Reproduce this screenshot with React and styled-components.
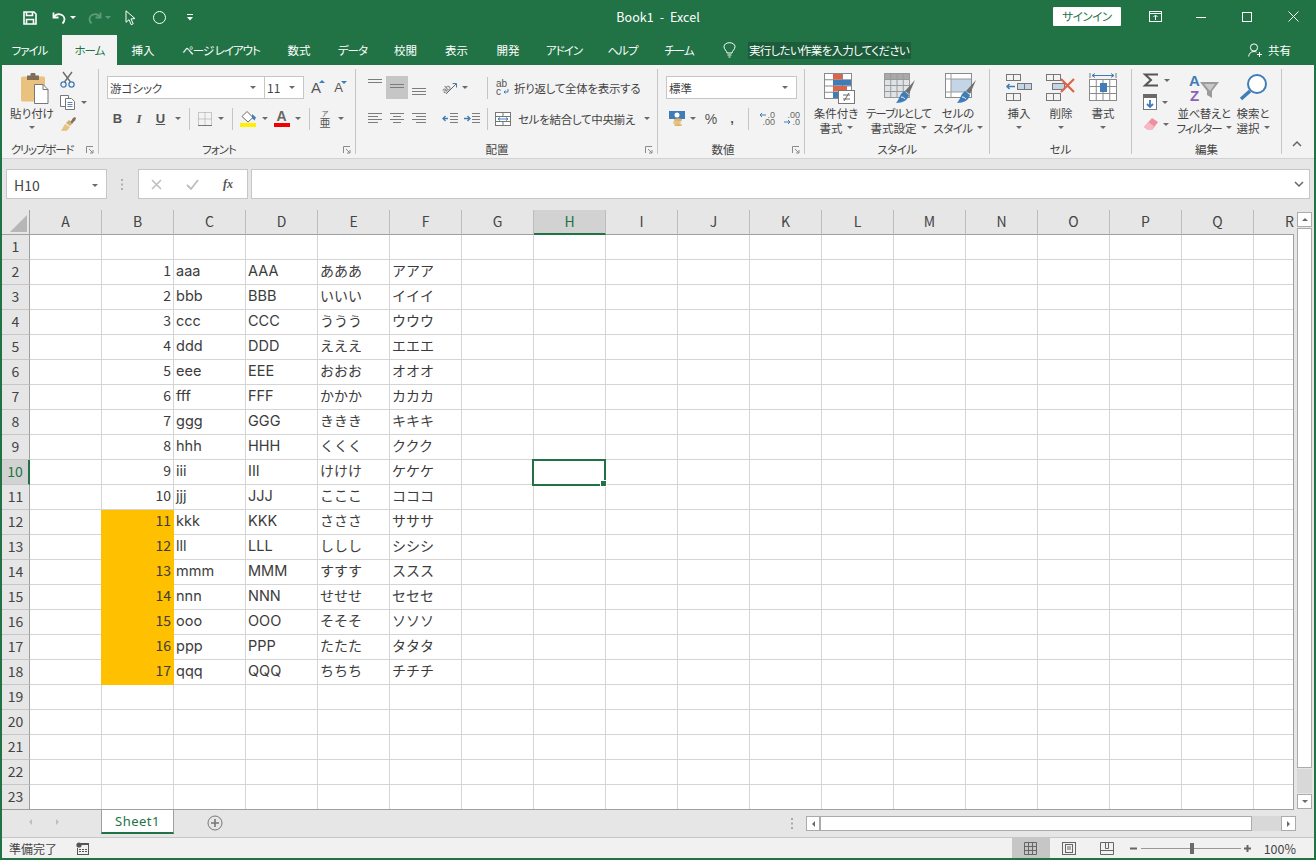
import React from "react";
import styled, { createGlobalStyle } from "styled-components";

const JP = `"Noto Sans CJK JP", "Noto Sans", sans-serif`;
const GREEN = "#217346";
const BLUE = "#3f7cb8";
const RED = "#d9664a";

const Global = createGlobalStyle`
  html, body { margin: 0; padding: 0; background: #fff; }
  * { box-sizing: border-box; }
  body { font-family: ${JP}; font-feature-settings: "palt"; color: #444; }
`;

const Window = styled.div`
  width: 1316px;
  height: 860px;
  display: flex;
  flex-direction: column;
  border: 2px solid ${GREEN};
  border-top: 0;
  overflow: hidden;
  background: #e6e6e6;
`;

/* title bar */
const TitleBar = styled.div`
  height: 35px;
  flex: none;
  margin: 0 -2px;
  background: ${GREEN};
  display: grid;
  grid-template-columns: 1fr auto 1fr;
  align-items: center;
  color: #fff;
`;
const Qat = styled.div`
  display: flex;
  align-items: center;
  padding-left: 23px;
`;
const QatItem = styled.span`
  display: flex;
  margin-left: ${(p) => p.$ml || 0}px;
`;
const Title = styled.div`
  font-size: 12.5px;
  white-space: pre;
  letter-spacing: 0.1px;
  margin-bottom: 2px;
`;
const WinControls = styled.div`
  display: flex;
  align-items: center;
  justify-content: flex-end;
  margin-bottom: 2px;
`;
const SignIn = styled.div`
  width: 68px;
  height: 19px;
  background: #fff;
  color: ${GREEN};
  font-size: 11.5px;
  line-height: 19px;
  text-align: center;
  letter-spacing: -0.4px;
  border-radius: 1px;
  margin-right: 11px;
`;
const WinBtn = styled.div`
  width: 46px;
  height: 20px;
  display: flex;
  align-items: center;
  justify-content: center;
`;
const Caret = styled.span`
  display: block;
  flex: none;
  width: 0;
  height: 0;
  border-left: 3px solid transparent;
  border-right: 3px solid transparent;
  border-top: 3px solid ${(p) => p.$c || "#6a6a6a"};
`;

/* tabs */
const TabRow = styled.div`
  height: 30px;
  flex: none;
  margin: 0 -2px;
  padding-left: 2px;
  background: ${GREEN};
  display: flex;
  align-items: stretch;
  color: #fff;
  font-size: 11.5px;
`;
const Tab = styled.div`
  width: ${(p) => p.$w}px;
  display: flex;
  align-items: center;
  justify-content: center;
  background: ${(p) => (p.$active ? "#f3f3f3" : "transparent")};
  color: ${(p) => (p.$active ? GREEN : "#fff")};
  margin-right: ${(p) => p.$mr || 0}px;
  letter-spacing: ${(p) => p.$ls}px;
  white-space: pre;
`;
const TellMe = styled.div`
  display: flex;
  align-items: center;
  margin-left: 16px;
  gap: 12px;
`;
const TellText = styled.span`
  background: #1b5c3a;
  padding: 0 1px;
  height: 17px;
  line-height: 17px;
  width: 163px;
  white-space: nowrap;
  letter-spacing: -0.7px;
`;
const Share = styled.div`
  margin-left: auto;
  margin-right: 25px;
  display: flex;
  align-items: center;
  gap: 6px;
`;

/* ribbon */
const Ribbon = styled.div`
  height: 94px;
  padding-top: 4px;
  background: #f3f3f3;
  border-bottom: 1px solid #d2d2d2;
  display: flex;
  flex: none;
`;
const Group = styled.div`
  width: ${(p) => p.$w}px;
  height: 85px;
  border-right: 1px solid #c6c6c6;
  display: flex;
  flex-direction: column;
  flex: none;
  position: relative;
`;
const GroupBody = styled.div`
  height: 75px;
  display: flex;
  padding-left: ${(p) => p.$pl || 0}px;
`;
const GroupLabel = styled.div`
  height: 10px;
  line-height: 10px;
  text-align: center;
  font-size: 11.5px;
  color: #444;
  padding-right: ${(p) => p.$pr || 0}px;
  letter-spacing: ${(p) => p.$ls || 0}px;
`;
const Launcher = styled.svg`
  position: absolute;
  right: 4px;
  bottom: 0;
  width: 8px;
  height: 8px;
`;
const Stack = styled.div`
  display: flex;
  flex-direction: column;
  padding-top: 7px;
  gap: 8px;
`;
const Row = styled.div`
  height: 23px;
  display: flex;
  align-items: center;
`;
const Tool = styled.div`
  width: ${(p) => p.$w}px;
  height: 23px;
  flex: none;
  display: flex;
  align-items: center;
  justify-content: center;
  margin-left: ${(p) => p.$ml || 0}px;
  background: ${(p) => (p.$on ? "#c6c6c6" : "transparent")};
  color: #555;
`;
const Letter = styled.span`
  font-family: "Liberation Serif", serif;
  font-weight: 700;
  font-size: 13px;
  color: #555;
  font-style: ${(p) => (p.$i ? "italic" : "normal")};
  text-decoration: ${(p) => (p.$u ? "underline" : "none")};
`;
const SansLetter = styled(Letter)`
  font-family: "Liberation Sans", sans-serif;
`;
const Percent = styled.span`
  font-family: "Liberation Sans", sans-serif;
  font-size: 14px;
  color: #555;
`;
const Comma = styled(Percent)`
  font-weight: 700;
  font-size: 13px;
  line-height: 8px;
`;
const GrowA = styled.span`
  position: relative;
  font-family: "Liberation Sans", sans-serif;
  font-size: ${(p) => p.$fs}px;
  color: #555;
`;
const Nub = styled.i`
  position: absolute;
  right: -4px;
  top: 1px;
  width: 0;
  height: 0;
  border-left: 3px solid transparent;
  border-right: 3px solid transparent;
  border-bottom: ${(p) => (p.$up ? `3px solid ${BLUE}` : "0")};
  border-top: ${(p) => (p.$up ? "0" : `3px solid ${BLUE}`)};
`;
const FontColor = styled.span`
  width: 16px;
  height: 17px;
  display: block;
  text-align: center;
  font-family: "Liberation Sans", sans-serif;
  font-weight: 700;
  font-size: 14px;
  line-height: 13px;
  color: #666;
  border-bottom: 4px solid #f00000;
`;
const Ruby = styled.span`
  display: flex;
  flex-direction: column;
  align-items: center;
  color: #555;
`;
const RubyKana = styled.span`
  font-size: 7px;
  line-height: 7px;
`;
const RubyBase = styled.span`
  font-size: 11px;
  line-height: 11px;
`;
const Decimal = styled.span`
  display: flex;
  flex-direction: column;
  align-items: flex-end;
  width: 20px;
  font-family: "Liberation Sans", sans-serif;
  font-size: 9px;
  line-height: 7px;
  color: #666;
`;
const DecimalLine = styled.span`
  display: flex;
  align-items: center;
  gap: 1px;
`;
const VSep = styled.div`
  width: 1px;
  height: 22px;
  flex: none;
  background: #c6c6c6;
  margin: 0 ${(p) => p.$r ?? 4}px 0 ${(p) => p.$l ?? 4}px;
`;
const Combo = styled.div`
  width: ${(p) => p.$w}px;
  height: 23px;
  flex: none;
  background: #fff;
  border: 1px solid #c6c6c6;
  margin-left: ${(p) => p.$ml || 0}px;
  display: flex;
  align-items: center;
  justify-content: space-between;
  padding: 0 8px 0 2px;
  font-size: ${(p) => p.$fs || 11.5}px;
`;
const RowText = styled.span`
  font-size: 11.5px;
  white-space: nowrap;
  letter-spacing: -0.3px;
  margin-left: ${(p) => p.$ml || 0}px;
`;
const Big = styled.div`
  width: ${(p) => p.$w}px;
  flex: none;
  display: flex;
  flex-direction: column;
  align-items: center;
`;
const BigIcon = styled.div`
  height: 37px;
  display: flex;
  align-items: flex-start;
  justify-content: center;
  flex: none;
  padding-top: ${(p) => p.$top ?? 4}px;
  padding-left: ${(p) => (p.$dx || 0) * 2}px;
`;
const BigText = styled.div`
  height: 14.5px;
  line-height: 14.5px;
  font-size: 11.5px;
  white-space: nowrap;
  display: flex;
  align-items: center;
  gap: 4px;
  letter-spacing: ${(p) => p.$ls || 0}px;
`;
const SmallCol = styled.div`
  width: ${(p) => p.$w}px;
  flex: none;
  display: flex;
  flex-direction: column;
  margin-left: ${(p) => p.$ml || 0}px;
`;
const SmallItem = styled.div`
  height: 22px;
  padding-left: ${(p) => p.$pl || 0}px;
  display: flex;
  align-items: center;
  gap: 5px;
`;
const Collapse = styled.div`
  flex: 1;
  display: flex;
  align-items: flex-end;
  justify-content: center;
  padding: 0 3px 7px 0;
  height: 85px;
`;

/* formula bar */
const FormulaBar = styled.div`
  height: 51px;
  padding: 10px 4px 11px 4px;
  display: flex;
  align-items: stretch;
  flex: none;
`;
const NameBox = styled.div`
  width: 101px;
  background: #fff;
  border: 1px solid #c6c6c6;
  display: flex;
  align-items: center;
  justify-content: space-between;
  padding: 2px 8px 0 7px;
  font-size: 14px;
  color: #444;
`;
const Grip = styled.div`
  width: 31px;
  display: flex;
  align-items: center;
  justify-content: center;
`;
const FxBox = styled.div`
  width: 110px;
  background: #fff;
  border: 1px solid #c6c6c6;
  display: flex;
  align-items: center;
  padding-left: 12px;
  gap: 24px;
`;
const FxText = styled.span`
  font-family: "Liberation Serif", serif;
  font-style: italic;
  font-weight: 700;
  font-size: 12px;
  color: #555;
`;
const FormulaInput = styled.div`
  width: 1059px;
  margin-left: 3px;
  background: #fff;
  border: 1px solid #c6c6c6;
  display: flex;
  align-items: center;
  justify-content: flex-end;
  padding-right: 5px;
`;

/* sheet */
const SheetArea = styled.div`
  height: 600px;
  display: flex;
  flex: none;
`;
const SheetGrid = styled.div`
  width: 1292px;
  height: 600px;
  overflow: hidden;
`;
const HeaderRow = styled.div`
  display: grid;
  grid-template-columns: 28px repeat(18, 72px);
  height: 25px;
`;
const Corner = styled.div`
  border-right: 1px solid #9f9f9f;
  border-bottom: 1px solid #9f9f9f;
  display: flex;
  align-items: flex-end;
  justify-content: flex-end;
  padding: 0 2px 2px 0;
`;
const Triangle = styled.div`
  width: 17px;
  height: 17px;
  background: #b6b6b6;
  clip-path: polygon(100% 0, 100% 100%, 0 100%);
`;
const ColHead = styled.div`
  background: ${(p) => (p.$sel ? "#d2d2d2" : "#e6e6e6")};
  border-right: 1px solid #bcbcbc;
  border-bottom: ${(p) => (p.$sel ? `2px solid ${GREEN}` : "1px solid #9f9f9f")};
  color: ${(p) => (p.$sel ? GREEN : "#444")};
  text-align: center;
  line-height: 23px;
  font-size: 14px;
`;
const Body = styled.div`
  display: grid;
  grid-template-columns: 28px repeat(18, 72px);
  grid-auto-rows: 25px;
  height: 575px;
  width: 1292px;
  overflow: hidden;
  border-right: 1px solid #9f9f9f;
  border-bottom: 1px solid #9f9f9f;
`;
const RowHead = styled.div`
  background: ${(p) => (p.$sel ? "#d2d2d2" : "#e6e6e6")};
  border-right: ${(p) => (p.$sel ? `2px solid ${GREEN}` : "1px solid #9f9f9f")};
  border-bottom: 1px solid #c6c6c6;
  color: ${(p) => (p.$sel ? GREEN : "#444")};
  text-align: center;
  line-height: 23px;
  font-size: 14px;
`;
const Cell = styled.div`
  background: ${(p) => p.$fill || "#fff"};
  border-right: 1px solid ${(p) => p.$fill || "#d4d4d4"};
  border-bottom: 1px solid ${(p) => p.$fill || "#d4d4d4"};
  box-shadow: ${(p) => (p.$fill ? `-1px 0 0 ${p.$fill}` : "none")};
  padding: 0 2px;
  text-align: ${(p) => (p.$num ? "right" : "left")};
  line-height: 21px;
  font-family: ${(p) => (p.$latin ? `Inter, ${JP}` : JP)};
  font-size: ${(p) => (p.$latin ? 14.5 : 14)}px;
  font-feature-settings: ${(p) => (p.$kana ? "normal" : '"palt"')};
  white-space: nowrap;
  color: #3c3c3c;
  position: relative;
`;
const Cursor = styled.div`
  position: absolute;
  left: -2px;
  top: -1px;
  width: 74px;
  height: 27px;
  border: 2px solid ${GREEN};
  z-index: 2;
  &::after {
    content: "";
    position: absolute;
    right: -3px;
    bottom: -3px;
    width: 5px;
    height: 5px;
    background: ${GREEN};
    border: 1px solid #fff;
  }
`;
const VScroll = styled.div`
  width: 20px;
  padding: 2px 1px 1px 3px;
  display: flex;
  flex-direction: column;
  gap: 1px;
`;
const ScrollBtn = styled.div`
  flex: none;
  width: ${(p) => p.$w || 15}px;
  height: 15px;
  background: #fff;
  border: 1px solid #ababab;
  display: flex;
  align-items: center;
  justify-content: center;
`;
const VThumb = styled.div`
  width: 15px;
  height: 540px;
  background: #fff;
  border: 1px solid #ababab;
  flex: none;
`;
const VTrack = styled.div`
  flex: 1;
  width: 15px;
  background: #d8d8d8;
`;
const Arrow = styled.span`
  width: 0;
  height: 0;
  border-style: solid;
  border-color: transparent;
  border-width: 3.5px;
  margin-top: ${(p) => (p.$d === "up" ? -3 : p.$d === "down" ? 3 : 0)}px;
  margin-left: ${(p) => (p.$d === "left" ? -3 : p.$d === "right" ? 3 : 0)}px;
  ${(p) => ({ up: "border-bottom", down: "border-top", left: "border-right", right: "border-left" })[p.$d]}-color: ${(p) => p.$c || "#6a6a6a"};
`;

/* sheet tabs */
const SheetBar = styled.div`
  height: 28px;
  flex: none;
  display: flex;
  border-bottom: 1px solid #c6c6c6;
`;
const NavArrows = styled.div`
  width: 99px;
  display: flex;
  align-items: center;
  padding: 0 0 3px 27px;
  gap: 21px;
`;
const SheetTab = styled.div`
  width: 73px;
  height: 24px;
  background: #fff;
  border-left: 1px solid #9f9f9f;
  border-right: 1px solid #9f9f9f;
  border-bottom: 2px solid ${GREEN};
  color: ${GREEN};
  font-family: "Noto Sans", sans-serif;
  font-size: 13px;
  letter-spacing: 0.5px;
  text-align: center;
  line-height: 23px;
`;
const AddSheet = styled.div`
  margin-left: 33px;
  padding-top: 5px;
`;
const HScroll = styled.div`
  margin-left: auto;
  margin-right: 18px;
  display: flex;
  align-items: center;
  padding-top: 6px;
  height: 21px;
`;
const HThumb = styled.div`
  width: 432px;
  height: 15px;
  background: #fff;
  border: 1px solid #ababab;
`;
const HTrack = styled.div`
  width: 29px;
  height: 15px;
  background: #d8d8d8;
`;
const BarGrip = styled.div`
  margin-right: 12px;
  display: flex;
`;

/* status */
const StatusBar = styled.div`
  height: 20px;
  flex: none;
  background: #f1f1f1;
  display: flex;
  align-items: center;
  padding-left: 7px;
  font-size: 12px;
  color: #444;
`;
const StatusText = styled.span`
  width: 67px;
  font-feature-settings: normal;
`;
const ViewBtns = styled.div`
  margin-left: auto;
  display: flex;
  align-items: center;
  height: 100%;
`;
const ViewBtn = styled.div`
  width: 38px;
  height: 100%;
  display: flex;
  align-items: center;
  justify-content: center;
  background: ${(p) => (p.$on ? "#c6c6c6" : "transparent")};
`;
const Zoom = styled.div`
  display: flex;
  align-items: center;
  margin-left: 4px;
  margin-right: 18px;
  gap: 3px;
`;
const Slider = styled.div`
  width: 100px;
  height: 1px;
  background: #999;
  position: relative;
  margin-left: 1px;
`;
const SliderKnob = styled.i`
  position: absolute;
  left: 49px;
  top: -5px;
  width: 4px;
  height: 11px;
  background: #6a6a6a;
`;
const ZoomText = styled.span`
  margin-left: 10px;
  font-size: 12.5px;
`;

const Svg = styled.svg`
  display: block;
  flex: none;
  overflow: visible;
`;

/* icons */
const SaveIcon = () => (
  <Svg width="14" height="14" viewBox="0 0 14 14" fill="none" stroke="#fff" strokeWidth="1.6">
    <path d="M1 1h10l2 2v10H1z" />
    <path d="M3.5 1v3.5h6V1M3.5 13V8.5h7V13" />
  </Svg>
);
const UndoIcon = ({ c = "#fff", flip }) => (
  <Svg width="14" height="12" viewBox="0 0 14 12" fill="none" stroke={c} strokeWidth="1.8" style={flip ? { transform: "scaleX(-1)" } : undefined}>
    <path d="M1.5 0.5v5h5" />
    <path d="M1.8 5.2C3.5 2.5 6 2 8 2.3c3 .5 4.5 3 4.5 5s-1 3.2-2 4.2" />
  </Svg>
);
const PointerIcon = () => (
  <Svg width="11" height="16" viewBox="0 0 11 16" fill="none" stroke="#fff" strokeWidth="1">
    <path d="M1 .8v11.5l3-2.6 2.2 5 2-.9-2.2-4.9 4-.3z" />
  </Svg>
);
const CircleIcon = () => (
  <Svg width="13" height="13" viewBox="0 0 13 13" fill="none" stroke="#fff" strokeWidth="1">
    <circle cx="6.5" cy="6.5" r="6" />
  </Svg>
);
const CustomizeIcon = () => (
  <Svg width="6" height="7" viewBox="0 0 6 7" fill="#fff">
    <rect y="0" width="6" height="1" />
    <path d="M0 3h6L3 6.5z" />
  </Svg>
);
const RibbonDisplayIcon = () => (
  <Svg width="13" height="11" viewBox="0 0 13 11" fill="none" stroke="#fff">
    <rect x=".5" y=".5" width="12" height="10" />
    <path d="M0 2.500h13M6.500 9V4.500M4.500 6l2-2 2 2" />
  </Svg>
);
const MinIcon = () => (
  <Svg width="10" height="10" viewBox="0 0 10 10" stroke="#fff"><path d="M0 5.500h10" /></Svg>
);
const MaxIcon = () => (
  <Svg width="10" height="10" viewBox="0 0 10 10" fill="none" stroke="#fff"><rect x=".5" y=".5" width="9" height="9" /></Svg>
);
const CloseIcon = () => (
  <Svg width="11" height="11" viewBox="0 0 11 11" stroke="#fff"><path d="M.5.500l10 10M10.500.5l-10 10" /></Svg>
);
const BulbIcon = () => (
  <Svg width="13" height="16" viewBox="0 0 13 16" fill="none" stroke="#fff">
    <path d="M4 11c0-2-3-3.500-3-6.300C1 2.400 3.400.7 6.500.7S12 2.400 12 4.700C12 7.500 9 9 9 11z" />
    <path d="M4.500 13h4M5.500 15h2" />
  </Svg>
);
const PersonIcon = () => (
  <Svg width="14" height="14" viewBox="0 0 14 14" fill="none" stroke="#fff">
    <circle cx="6" cy="4.500" r="3.600" />
    <path d="M.7 13.500c.3-3 2-5 5.300-5 1 0 1.800.2 2.500.6M9 11.500h5M11.500 9v5" />
  </Svg>
);
const PasteIcon = () => (
  <Svg width="28" height="31" viewBox="0 0 28 31">
    <rect x="0" y="3.500" width="24" height="25" rx="1.500" fill="#e9c27f" />
    <path d="M6 2.500h3.500V1.200C9.500.5 10 0 11 0h2c1 0 1.500.5 1.500 1.200v1.300H18V7H6z" fill="#7f6f58" />
    <path d="M13.500 11.500h8.500l5 5v14H13.500z" fill="#fff" stroke="#777" />
    <path d="M22 11.500v5h5" fill="none" stroke="#777" />
  </Svg>
);
const CutIcon = () => (
  <Svg width="15" height="16" viewBox="0 0 15 16" fill="none">
    <path d="M3 0l7.500 10M12 0L4.500 10" stroke="#6a6a6a" strokeWidth="1.400" />
    <circle cx="3.500" cy="12.500" r="2.600" stroke={BLUE} strokeWidth="1.300" />
    <circle cx="11.500" cy="12.500" r="2.600" stroke={BLUE} strokeWidth="1.300" />
  </Svg>
);
const CopyIcon = () => (
  <Svg width="16" height="15" viewBox="0 0 16 15" fill="#fff" stroke="#777">
    <path d="M.5.500h8v11h-8z" />
    <path d="M5.500 3.500h6l3 3v8h-9z" />
    <path d="M7.500 7.500h5M7.500 9.500h5M7.500 11.500h5" stroke="#5f87ad" />
  </Svg>
);
const BrushIcon = () => (
  <Svg width="16" height="15" viewBox="0 0 16 15">
    <path d="M5 7l5 3-3 3.800L1 14z" fill="#e9c27f" />
    <path d="M6 6l3-3 4 3-3 3z" fill="#cfae78" />
    <path d="M10.500 5L13 1l2-1 1 1.200-1 2.300-3 3z" fill="#7f6f58" />
  </Svg>
);
const BordersIcon = () => (
  <Svg width="14" height="14" viewBox="0 0 14 14" stroke="#9a9a9a" strokeDasharray="1 1" fill="none">
    <path d="M.5.500h13v13H.5zM7 .5v13M.5 7h13" />
    <path d="M0 13.500h14" stroke="#777" strokeDasharray="0" />
  </Svg>
);
const FillIcon = () => (
  <Svg width="17" height="16" viewBox="0 0 17 16">
    <path d="M7 .5l6 6-5 4.500-6-5.500z" fill="#fff" stroke="#6a6a6a" />
    <path d="M12 3l4 3.500-1.500 3-2.500-2.500z" fill={BLUE} />
    <rect y="12" width="16" height="4" fill="#fff000" />
  </Svg>
);
const Lines = ({ rows, w = 14 }) => (
  <Svg width={w} height="23" viewBox={`0 0 ${w} 23`} fill="#7c7c7c">
    {rows.map(([x, width, y]) => (
      <rect key={y} x={x} y={y} width={width} height="1" />
    ))}
  </Svg>
);
const OrientIcon = () => (
  <Svg width="16" height="14" viewBox="0 0 16 14" fill="none">
    <text x="0" y="10" transform="rotate(-40 5 8)" fontFamily="Liberation Sans" fontSize="8" fill="#666">ab</text>
    <path d="M4 13L14 3" stroke="#6a6a6a" />
    <path d="M10.500 2.500h4v4" stroke={BLUE} />
  </Svg>
);
const IndentIcon = ({ right }) => (
  <Svg width="16" height="11" viewBox="0 0 16 11">
    <path d={right ? "M0 5.500h5M3.500 3L6 5.500 3.500 8" : "M6 5.500H1M3.500 3L1 5.500 3.500 8"} fill="none" stroke={BLUE} strokeWidth="1.300" />
    <path d="M8 0h8v1H8zM8 3h8v1H8zM8 6h8v1H8zM8 9h8v1H8z" fill="#7c7c7c" />
  </Svg>
);
const WrapIcon = () => (
  <Svg width="14" height="16" viewBox="0 0 14 16">
    <text x="0" y="7" fontFamily="Liberation Sans" fontSize="10" fill="#555">ab</text>
    <text x="0" y="15" fontFamily="Liberation Sans" fontSize="10" fill="#555">c</text>
    <path d="M12 9v3H8M9.500 10.500L8 12l1.500 1.500" fill="none" stroke={BLUE} />
  </Svg>
);
const MergeIcon = () => (
  <Svg width="16" height="14" viewBox="0 0 16 14" fill="#fff" stroke="#777">
    <rect x=".5" y=".5" width="15" height="13" />
    <path d="M.5 4.500h15M.5 9.500h15M8 .5v4M8 9.500v4" fill="none" />
    <path d="M3 7h10M5 5.500L3 7l2 1.500M11 5.500L13 7l-2 1.500" fill="none" stroke={BLUE} />
  </Svg>
);
const CurrencyIcon = () => (
  <Svg width="16" height="15" viewBox="0 0 16 15">
    <rect x="0" y="0" width="16" height="8" fill={BLUE} />
    <circle cx="8" cy="4" r="2.500" fill="#fff" />
    <ellipse cx="9" cy="9" rx="4" ry="1.700" fill="#dcb36a" />
    <ellipse cx="8" cy="11.500" rx="4" ry="1.700" fill="#e8c27f" />
    <ellipse cx="9" cy="14" rx="4" ry="1.000" fill="#dcb36a" />
  </Svg>
);
const DecArrow = ({ right }) => (
  <Svg width="7" height="6" viewBox="0 0 7 6" fill="none" stroke={BLUE}>
    <path d={right ? "M0 3h6M4 1l2 2-2 2" : "M7 3H1M3 1L1 3l2 2"} />
  </Svg>
);
const DecimalIcon = ({ up }) => (
  <Decimal>
    <DecimalLine>{up && <DecArrow />}{up ? ".0" : ".00"}</DecimalLine>
    <DecimalLine>{!up && <DecArrow right />}{up ? ".00" : ".0"}</DecimalLine>
  </Decimal>
);
const GridBase = ({ x = 0.5, y = 0.5, w = 24, h = 24, cols = 3, rows = 3, c = "#8a8a8a" }) => (
  <g fill="none" stroke={c}>
    <rect x={x} y={y} width={w} height={h} />
    {Array.from({ length: cols - 1 }, (_, i) => (
      <path key={i} d={`M${x + ((i + 1) * w) / cols} ${y}v${h}`} />
    ))}
    {Array.from({ length: rows - 1 }, (_, i) => (
      <path key={i} d={`M${x} ${y + ((i + 1) * h) / rows}h${w}`} />
    ))}
  </g>
);
const CondIcon = () => (
  <Svg width="31" height="31" viewBox="0 0 31 31">
    <rect x=".5" y=".5" width="27" height="25" fill="#fff" />
    <GridBase w={27} h={25} cols={3} rows={4} />
    <rect x="9" y="1" width="9" height="5.500" fill={RED} />
    <rect x="9" y="7" width="18" height="5.500" fill={BLUE} />
    <rect x="9" y="13" width="14" height="5.500" fill={RED} />
    <rect x="9" y="19" width="7" height="6" fill={BLUE} />
    <rect x="14.500" y="17.500" width="16" height="13" fill="#fff" stroke="#777" />
    <path d="M19 22h7M19 26h7M25 20l-5 8" fill="none" stroke="#666" />
  </Svg>
);
const BrushOverlay = () => (
  <g>
    <path d="M31 7l-6 14-4-3z" fill="#707070" />
    <path d="M20 18l5 4c-1 5-6 8-13 8 2-2 3-5 5-9z" fill={BLUE} />
    <path d="M17 24c2 0 3 1 4 2" fill="none" stroke="#fff" />
  </g>
);
const TableIcon = () => (
  <Svg width="31" height="31" viewBox="0 0 31 31">
    <rect x=".5" y=".5" width="25" height="24" fill="#dfe3e8" />
    <rect x=".5" y=".5" width="25" height="6" fill="#a9a9a9" />
    <GridBase w={25} h={24} cols={4} rows={4} c="#9a9a9a" />
    <BrushOverlay />
  </Svg>
);
const CellStyleIcon = () => (
  <Svg width="31" height="31" viewBox="0 0 31 31">
    <rect x=".5" y=".5" width="26" height="24" fill="#fff" stroke="#8a8a8a" />
    <rect x="6" y="6" width="20" height="13" fill="#c5d5e8" />
    <path d="M6 .5v24M.5 6h26M.5 19h26" stroke="#9a9a9a" fill="none" />
    <BrushOverlay />
  </Svg>
);
const InsertIcon = () => (
  <Svg width="28" height="27" viewBox="0 0 28 27">
    <GridBase x={1.500} y={.5} w={14} h={6} cols={2} rows={1} c="#777" />
    <GridBase x={1.500} y={19.500} w={14} h={7} cols={2} rows={1} c="#777" />
    <rect x="12.500" y="9.500" width="14" height="6" fill="#c5d5e8" stroke="#777" />
    <path d="M19.500 9.500v6" stroke="#777" />
    <path d="M10 12.500H2M4.500 10L2 12.500 4.500 15" fill="none" stroke={BLUE} strokeWidth="1.500" />
  </Svg>
);
const DeleteIcon = () => (
  <Svg width="30" height="27" viewBox="0 0 30 27">
    <GridBase x={.5} y={.5} w={14} h={6} cols={2} rows={1} c="#777" />
    <GridBase x={.5} y={19.500} w={14} h={7} cols={2} rows={1} c="#777" />
    <rect x="6.500" y="9.500" width="12" height="6" fill="#c5d5e8" stroke="#777" />
    <path d="M15 5l13 13M28 5L15 18" stroke={RED} strokeWidth="2.200" />
  </Svg>
);
const FormatIcon = () => (
  <Svg width="28" height="31" viewBox="0 0 28 31">
    <path d="M1 1v5M27 1v5" stroke="#777" />
    <path d="M3 3.500h22M6 1.500l-3 2 3 2M22 1.500l3 2-3 2" fill="none" stroke={BLUE} />
    <rect x=".5" y="7.500" width="27" height="21" fill="#fff" />
    <GridBase y={7.500} w={27} h={21} cols={4} rows={3} c="#8a8a8a" />
    <rect x="11" y="11" width="7" height="9" fill={BLUE} />
  </Svg>
);
const SigmaIcon = () => (
  <Svg width="16" height="14" viewBox="0 0 16 14" fill="none" stroke="#555" strokeWidth="2">
    <path d="M15 1.500H2L8 7l-6 5.500h13" />
  </Svg>
);
const FillDownIcon = () => (
  <Svg width="14" height="16" viewBox="0 0 14 16">
    <rect x=".5" y=".5" width="13" height="15" fill="#fff" stroke="#777" />
    <rect width="14" height="4" fill="#6a6a6a" />
    <path d="M7 6v7M4 10l3 3 3-3" fill="none" stroke={BLUE} strokeWidth="1.800" />
  </Svg>
);
const EraserIcon = () => (
  <Svg width="15" height="12" viewBox="0 0 15 12">
    <path d="M9 0l6 4-6 8-4 0-4-3z" fill="#ee8fa0" />
    <path d="M5 4l6 4-2 4H5L1 9z" fill="#f6b9c4" />
  </Svg>
);
const SortIcon = () => (
  <Svg width="31" height="27" viewBox="0 0 31 27">
    <text x="0" y="12" fontFamily="Liberation Sans" fontWeight="700" fontSize="15" fill={BLUE}>A</text>
    <text x="1" y="26.500" fontFamily="Liberation Sans" fontWeight="700" fontSize="15" fill="#8d5fb5">Z</text>
    <path d="M11 8h19l-7 9v7l-5-3v-4z" fill="#9b9b9b" />
    <path d="M15 10h11l-5 7z" fill="#c9c9c9" />
  </Svg>
);
const FindIcon = () => (
  <Svg width="29" height="27" viewBox="0 0 29 27" fill="none">
    <circle cx="18" cy="10" r="9" stroke={BLUE} strokeWidth="2" fill="#fff" />
    <path d="M11 17l-9 8" stroke={BLUE} strokeWidth="3.500" />
  </Svg>
);
const GripDots = ({ c = "#9a9a9a" }) => (
  <Svg width="3" height="11" viewBox="0 0 3 11" fill={c}>
    <rect y="0" width="2" height="2" />
    <rect y="4.500" width="2" height="2" />
    <rect y="9" width="2" height="2" />
  </Svg>
);
const XMark = () => (
  <Svg width="11" height="11" viewBox="0 0 11 11" stroke="#bdbdbd" strokeWidth="1.500"><path d="M1 1l9 9M10 1l-9 9" /></Svg>
);
const Check = () => (
  <Svg width="13" height="11" viewBox="0 0 13 11" fill="none" stroke="#bdbdbd" strokeWidth="1.800"><path d="M1 6l4 4 7-9" /></Svg>
);
const Chevron = ({ up }) => (
  <Svg width="10" height="6" viewBox="0 0 10 6" fill="none" stroke="#666" strokeWidth="1.500" style={up ? { transform: "scaleY(-1)" } : undefined}>
    <path d="M1 1l4 4 4-4" />
  </Svg>
);
const PlusCircle = () => (
  <Svg width="16" height="16" viewBox="0 0 16 16" fill="none" stroke="#777">
    <circle cx="8" cy="8" r="7" />
    <path d="M4 8h8M8 4v8" strokeWidth="1.600" />
  </Svg>
);
const MacroIcon = () => (
  <Svg width="13" height="13" viewBox="0 0 13 13" fill="#555">
    <circle cx="3" cy="3" r="2.600" />
    <path d="M5 1h8v12H1V6h1v6h10V3H5z" />
    <path d="M3 7h2v1H3zM6 7h2v1H6zM9 7h2v1H9zM3 9h2v1H3zM6 9h2v1H6zM9 9h2v1H9z" />
  </Svg>
);
const NormalView = () => (
  <Svg width="13" height="13" viewBox="0 0 13 13" fill="none" stroke="#666">
    <path d="M.5.500h12v12H.5zM4.500.5v12M8.500.5v12M.5 4.500h12M.5 8.500h12" />
  </Svg>
);
const PageView = () => (
  <Svg width="14" height="13" viewBox="0 0 14 13" fill="none" stroke="#666">
    <rect x=".5" y=".5" width="13" height="12" />
    <rect x="3.500" y="2.500" width="7" height="8" />
    <path d="M5 5h4M5 7h4" />
  </Svg>
);
const BreakView = () => (
  <Svg width="14" height="13" viewBox="0 0 14 13" fill="none" stroke="#666">
    <path d="M.5.500h13v12H.5zM5.500.5v6h3v-6M.5 8.500h13" />
  </Svg>
);
const ZoomSign = ({ plus }) => (
  <Svg width="7" height="7" viewBox="0 0 7 7" fill="#666">
    <rect y="2.500" width="7" height="2" />
    {plus && <rect x="2.500" width="2" height="7" />}
  </Svg>
);

const TABS = [
  ["ファイル", 55, false, 5],
  ["ホーム", 55, true],
  ["挿入", 52],
  ["ページ レイアウト", 104],
  ["数式", 52],
  ["データ", 55],
  ["校閲", 51],
  ["表示", 51],
  ["開発", 52],
  ["アドイン", 60],
  ["ヘルプ", 57],
  ["チーム", 56],
];

const COLS = "ABCDEFGHIJKLMNOPQR".split("");
const HIRA = "あいうえおかきくけこさしすせそたち".split("");
const KATA = "アイウエオカキクケコサシスセソタチ".split("");
const LATIN = "abcdefghijklmnopq".split("");

const cellProps = (rowNo, col) => {
  const i = rowNo - 2;
  if (i < 0 || i >= 17) return {};
  switch (col) {
    case "B":
      return { $num: true, text: i + 1, $fill: i >= 10 ? "#ffc000" : undefined };
    case "C":
      return { $latin: true, text: LATIN[i].repeat(3) };
    case "D":
      return { $latin: true, text: LATIN[i].toUpperCase().repeat(3) };
    case "E":
      return { $kana: true, text: HIRA[i].repeat(3) };
    case "F":
      return { $kana: true, text: KATA[i].repeat(3) };
    default:
      return {};
  }
};

const LauncherMark = () => (
  <Launcher viewBox="0 0 8 8" fill="none" stroke="#8a8a8a">
    <path d="M.5 7V.5H7M3 3l4 4M7 4v3H4" />
  </Launcher>
);

const Sheet = () => (
  <SheetGrid>
    <HeaderRow>
      <Corner><Triangle /></Corner>
      {COLS.map((c) => (
        <ColHead key={c} $sel={c === "H"}>{c}</ColHead>
      ))}
    </HeaderRow>
    <Body>
      {Array.from({ length: 23 }, (_, r) => r + 1).map((n) => (
        <React.Fragment key={n}>
          <RowHead $sel={n === 10}>{n}</RowHead>
          {COLS.map((c) => {
            const { text, ...rest } = cellProps(n, c);
            return (
              <Cell key={c} {...rest}>
                {text}
                {n === 10 && c === "H" && <Cursor />}
              </Cell>
            );
          })}
        </React.Fragment>
      ))}
    </Body>
  </SheetGrid>
);

export default function App() {
  return (
    <>
      <Global />
      <Window>
        <TitleBar>
          <Qat>
            <QatItem><SaveIcon /></QatItem>
            <QatItem $ml={15}><UndoIcon /></QatItem>
            <QatItem $ml={4}><Caret $c="#fff" /></QatItem>
            <QatItem $ml={12}><UndoIcon c="#5f9a7c" flip /></QatItem>
            <QatItem $ml={3}><Caret $c="#5f9a7c" /></QatItem>
            <QatItem $ml={14}><PointerIcon /></QatItem>
            <QatItem $ml={17}><CircleIcon /></QatItem>
            <QatItem $ml={21}><CustomizeIcon /></QatItem>
          </Qat>
          <Title>Book1  -  Excel</Title>
          <WinControls>
            <SignIn>サインイン</SignIn>
            <WinBtn><RibbonDisplayIcon /></WinBtn>
            <WinBtn><MinIcon /></WinBtn>
            <WinBtn><MaxIcon /></WinBtn>
            <WinBtn><CloseIcon /></WinBtn>
          </WinControls>
        </TitleBar>

        <TabRow>
          {TABS.map(([label, w, active, mr]) => (
            <Tab key={label} $w={w} $active={active} $mr={mr} $ls={/[\u4e00-\u9fff]/.test(label) ? 0 : -1}>{label}</Tab>
          ))}
          <TellMe>
            <BulbIcon />
            <TellText>実行したい作業を入力してください</TellText>
          </TellMe>
          <Share><PersonIcon />共有</Share>
        </TabRow>

        <Ribbon>
          <Group $w={97}>
            <GroupBody $pl={7}>
              <Big $w={46}>
                <BigIcon $dx={3}><PasteIcon /></BigIcon>
                <BigText>貼り付け</BigText>
                <BigText><Caret /></BigText>
              </Big>
              <SmallCol $ml={4} $w={34}>
                <SmallItem $pl={1}><CutIcon /></SmallItem>
                <SmallItem $pl={1}><CopyIcon /><Caret /></SmallItem>
                <SmallItem $pl={1}><BrushIcon /></SmallItem>
              </SmallCol>
            </GroupBody>
            <GroupLabel $pr={16} $ls={-1.2}>クリップボード</GroupLabel>
            <LauncherMark />
          </Group>

          <Group $w={257}>
            <GroupBody $pl={8}>
              <Stack>
                <Row>
                  <Combo $w={158}>游ゴシック<Caret /></Combo>
                  <Combo $w={40} $ml={-1} $fs={12}>11<Caret /></Combo>
                  <Tool $w={22} $ml={1}><GrowA $fs={15}>A<Nub $up /></GrowA></Tool>
                  <Tool $w={23}><GrowA $fs={13}>A<Nub /></GrowA></Tool>
                </Row>
                <Row>
                  <Tool $w={21}><SansLetter>B</SansLetter></Tool>
                  <Tool $w={22}><Letter $i>I</Letter></Tool>
                  <Tool $w={21}><SansLetter $u>U</SansLetter></Tool>
                  <Tool $w={14}><Caret /></Tool>
                  <VSep />
                  <Tool $w={22}><BordersIcon /></Tool>
                  <Tool $w={10}><Caret /></Tool>
                  <VSep $l={6} $r={6} />
                  <Tool $w={19}><FillIcon /></Tool>
                  <Tool $w={14}><Caret /></Tool>
                  <Tool $w={19}><FontColor>A</FontColor></Tool>
                  <Tool $w={14}><Caret /></Tool>
                  <VSep />
                  <Tool $w={22}>
                    <Ruby><RubyKana>ア</RubyKana><RubyBase>亜</RubyBase></Ruby>
                  </Tool>
                  <Tool $w={10}><Caret /></Tool>
                </Row>
              </Stack>
            </GroupBody>
            <GroupLabel $pr={16} $ls={-1}>フォント</GroupLabel>
            <LauncherMark />
          </Group>

          <Group $w={302}>
            <GroupBody $pl={8}>
              <Stack>
                <Row>
                  <Tool $w={22}><Lines rows={[[0, 14, 3], [0, 14, 6]]} /></Tool>
                  <Tool $w={22} $on><Lines rows={[[0, 14, 8], [0, 14, 11]]} /></Tool>
                  <Tool $w={22}><Lines rows={[[0, 14, 12], [0, 14, 15], [0, 14, 18]]} /></Tool>
                  <Tool $w={20} $ml={10}><OrientIcon /></Tool>
                  <Tool $w={10}><Caret /></Tool>
                  <VSep $l={17} $r={8} />
                  <WrapIcon />
                  <RowText $ml={4}>折り返して全体を表示する</RowText>
                </Row>
                <Row>
                  <Tool $w={22}><Lines rows={[[0, 14, 6], [0, 10, 9], [0, 14, 12], [0, 10, 15]]} /></Tool>
                  <Tool $w={22}><Lines rows={[[0, 14, 6], [3, 8, 9], [0, 14, 12], [3, 8, 15]]} /></Tool>
                  <Tool $w={22}><Lines rows={[[0, 14, 6], [4, 10, 9], [0, 14, 12], [4, 10, 15]]} /></Tool>
                  <Tool $w={22} $ml={9}><IndentIcon /></Tool>
                  <Tool $w={22}><IndentIcon right /></Tool>
                  <VSep />
                  <Tool $w={22}><MergeIcon /></Tool>
                  <RowText $ml={4}>セルを結合して中央揃え</RowText>
                  <Tool $w={10} $ml={7}><Caret /></Tool>
                </Row>
              </Stack>
            </GroupBody>
            <GroupLabel $pr={19}>配置</GroupLabel>
            <LauncherMark />
          </Group>

          <Group $w={147}>
            <GroupBody $pl={8}>
              <Stack>
                <Row>
                  <Combo $w={131}>標準<Caret /></Combo>
                </Row>
                <Row>
                  <Tool $w={22}><CurrencyIcon /></Tool>
                  <Tool $w={10}><Caret /></Tool>
                  <Tool $w={22} $ml={2}><Percent>%</Percent></Tool>
                  <Tool $w={20}><Comma>,</Comma></Tool>
                  <VSep $l={6} $r={5} />
                  <Tool $w={22}><DecimalIcon up /></Tool>
                  <Tool $w={22} $ml={3}><DecimalIcon /></Tool>
                </Row>
              </Stack>
            </GroupBody>
            <GroupLabel $pr={16}>数値</GroupLabel>
            <LauncherMark />
          </Group>

          <Group $w={185}>
            <GroupBody>
              <Big $w={62}>
                <BigIcon $dx={3}><CondIcon /></BigIcon>
                <BigText>条件付き</BigText>
                <BigText>書式<Caret /></BigText>
              </Big>
              <Big $w={63}>
                <BigIcon $dx={1}><TableIcon /></BigIcon>
                <BigText $ls={-1}>テーブルとして</BigText>
                <BigText>書式設定<Caret /></BigText>
              </Big>
              <Big $w={56}>
                <BigIcon $dx={2}><CellStyleIcon /></BigIcon>
                <BigText>セルの</BigText>
                <BigText $ls={-0.5}>スタイル<Caret /></BigText>
              </Big>
            </GroupBody>
            <GroupLabel $ls={-0.5}>スタイル</GroupLabel>
          </Group>

          <Group $w={142}>
            <GroupBody $pl={8}>
              <Big $w={42}>
                <BigIcon $top={5}><InsertIcon /></BigIcon>
                <BigText>挿入</BigText>
                <BigText><Caret /></BigText>
              </Big>
              <Big $w={42}>
                <BigIcon $top={5}><DeleteIcon /></BigIcon>
                <BigText>削除</BigText>
                <BigText><Caret /></BigText>
              </Big>
              <Big $w={42}>
                <BigIcon $top={3}><FormatIcon /></BigIcon>
                <BigText>書式</BigText>
                <BigText><Caret /></BigText>
              </Big>
            </GroupBody>
            <GroupLabel>セル</GroupLabel>
          </Group>

          <Group $w={150}>
            <GroupBody $pl={11}>
              <SmallCol $w={32}>
                <SmallItem><SigmaIcon /><Caret /></SmallItem>
                <SmallItem><FillDownIcon /><Caret /></SmallItem>
                <SmallItem><EraserIcon /><Caret /></SmallItem>
              </SmallCol>
              <Big $w={58}>
                <BigIcon $top={5}><SortIcon /></BigIcon>
                <BigText $ls={-0.5}>並べ替えと</BigText>
                <BigText $ls={-1}>フィルター<Caret /></BigText>
              </Big>
              <Big $w={40}>
                <BigIcon $top={5}><FindIcon /></BigIcon>
                <BigText>検索と</BigText>
                <BigText>選択<Caret /></BigText>
              </Big>
            </GroupBody>
            <GroupLabel>編集</GroupLabel>
          </Group>

          <Collapse><Chevron up /></Collapse>
        </Ribbon>

        <FormulaBar>
          <NameBox>H10<Caret /></NameBox>
          <Grip><GripDots c="#b0b0b0" /></Grip>
          <FxBox>
            <XMark />
            <Check />
            <FxText>fx</FxText>
          </FxBox>
          <FormulaInput><Chevron /></FormulaInput>
        </FormulaBar>

        <SheetArea>
          <Sheet />
          <VScroll>
            <ScrollBtn><Arrow $d="up" /></ScrollBtn>
            <VThumb />
            <VTrack />
            <ScrollBtn><Arrow $d="down" /></ScrollBtn>
          </VScroll>
        </SheetArea>

        <SheetBar>
          <NavArrows>
            <Arrow $d="left" $c="#bdbdbd" />
            <Arrow $d="right" $c="#bdbdbd" />
          </NavArrows>
          <SheetTab>Sheet1</SheetTab>
          <AddSheet><PlusCircle /></AddSheet>
          <HScroll>
            <BarGrip><GripDots c="#a8a8a8" /></BarGrip>
            <ScrollBtn $w={14}><Arrow $d="left" /></ScrollBtn>
            <HThumb />
            <HTrack />
            <ScrollBtn><Arrow $d="right" /></ScrollBtn>
          </HScroll>
        </SheetBar>

        <StatusBar>
          <StatusText>準備完了</StatusText>
          <MacroIcon />
          <ViewBtns>
            <ViewBtn $on><NormalView /></ViewBtn>
            <ViewBtn><PageView /></ViewBtn>
            <ViewBtn><BreakView /></ViewBtn>
            <Zoom>
              <ZoomSign />
              <Slider><SliderKnob /></Slider>
              <ZoomSign plus />
              <ZoomText>100%</ZoomText>
            </Zoom>
          </ViewBtns>
        </StatusBar>
      </Window>
    </>
  );
}
